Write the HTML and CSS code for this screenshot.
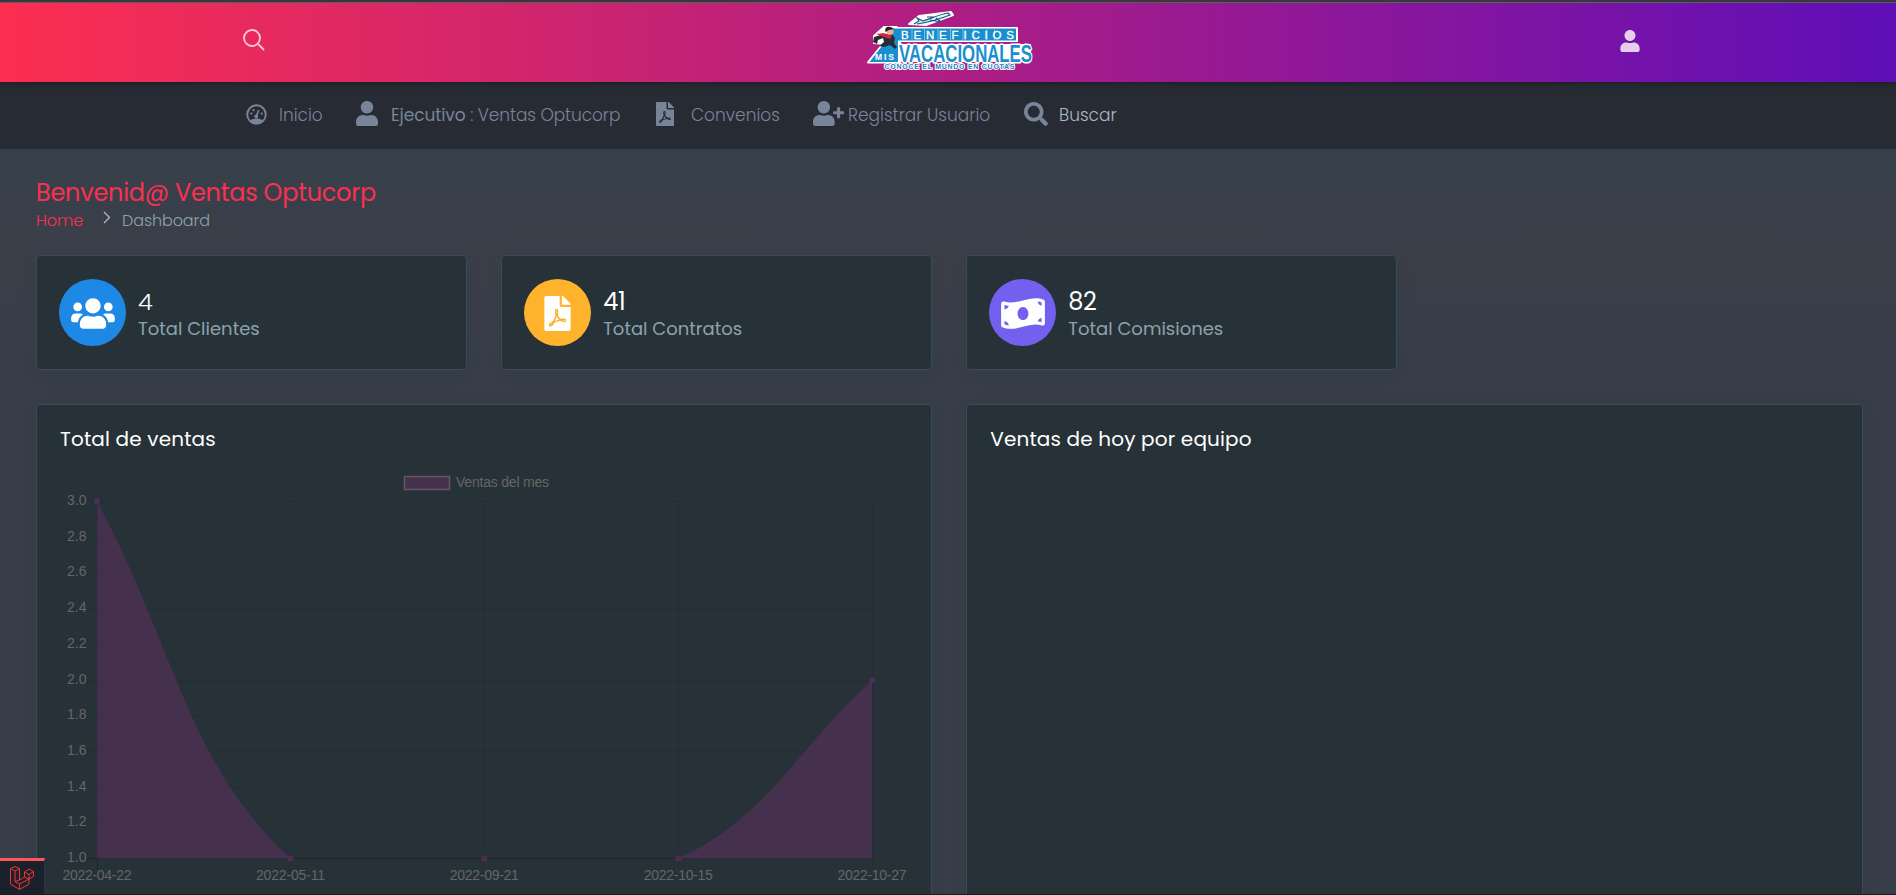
FILE: index.html
```html
<!DOCTYPE html>
<html lang="es">
<head>
<meta charset="utf-8">
<title>Beneficios Vacacionales</title>
<link rel="stylesheet" href="styles.css">
</head>
<body>
<svg class="symbols" aria-hidden="true">
  <symbol id="user" viewBox="0 0 448 512"><path d="M224 256c70.7 0 128-57.3 128-128S294.7 0 224 0 96 57.3 96 128s57.3 128 128 128zm89.6 32h-16.7c-22.2 10.2-46.9 16-72.9 16s-50.6-5.8-72.9-16h-16.7C60.2 288 0 348.2 0 422.4V464c0 26.5 21.5 48 48 48h352c26.5 0 48-21.5 48-48v-41.6c0-74.2-60.2-134.4-134.4-134.4z"/></symbol>
  <symbol id="user-plus" viewBox="0 0 640 512"><path d="M624 208h-64v-64c0-8.800-7.200-16-16-16h-32c-8.800 0-16 7.200-16 16v64h-64c-8.800 0-16 7.200-16 16v32c0 8.800 7.200 16 16 16h64v64c0 8.800 7.200 16 16 16h32c8.800 0 16-7.200 16-16v-64h64c8.800 0 16-7.200 16-16v-32c0-8.800-7.200-16-16-16zm-400 48c70.700 0 128-57.300 128-128S294.700 0 224 0 96 57.300 96 128s57.300 128 128 128zm89.600 32h-16.700c-22.200 10.200-46.900 16-72.900 16s-50.600-5.800-72.900-16h-16.700C60.200 288 0 348.200 0 422.400V464c0 26.500 21.500 48 48 48h352c26.500 0 48-21.500 48-48v-41.600c0-74.200-60.200-134.400-134.400-134.400z"/></symbol>
  <symbol id="users" viewBox="0 0 640 512"><path d="M96 224c35.300 0 64-28.700 64-64s-28.700-64-64-64-64 28.700-64 64 28.700 64 64 64zm448 0c35.300 0 64-28.700 64-64s-28.700-64-64-64-64 28.700-64 64 28.700 64 64 64zm32 32h-64c-17.600 0-33.500 7.100-45.100 18.600 40.300 22.100 68.900 62 75.100 109.400h66c17.700 0 32-14.300 32-32v-32c0-35.300-28.700-64-64-64zm-256 0c61.900 0 112-50.100 112-112S381.900 32 320 32 208 82.100 208 144s50.100 112 112 112zm76.800 32h-8.300c-20.800 10-43.900 16-68.500 16s-47.600-6-68.500-16h-8.300C179.600 288 128 339.600 128 403.200V432c0 26.500 21.500 48 48 48h288c26.500 0 48-21.500 48-48v-28.800c0-63.600-51.600-115.200-115.200-115.200zm-223.700-13.400C161.500 263.100 145.600 256 128 256H64c-35.300 0-64 28.700-64 64v32c0 17.700 14.300 32 32 32h65.900c6.300-47.400 34.900-87.300 75.200-109.400z"/></symbol>
  <symbol id="pdf" viewBox="0 0 384 512"><path d="M181.900 256.100c-5-16-4.900-46.900-2-46.900 8.400 0 7.600 36.900 2 46.900zm-1.700 47.200c-7.700 20.200-17.300 43.300-28.400 62.700 18.300-7 39-17.200 62.900-21.900-12.700-9.600-24.900-23.400-34.500-40.800zM86.100 428.100c0 .8 13.200-5.400 34.900-40.200-6.700 6.300-29.100 24.500-34.900 40.200zM248 160h136v328c0 13.300-10.700 24-24 24H24c-13.300 0-24-10.700-24-24V24C0 10.700 10.700 0 24 0h200v136c0 13.200 10.800 24 24 24zm-8 171.800c-20-12.200-33.300-29-42.700-53.800 4.500-18.500 11.600-46.600 6.200-64.200-4.700-29.400-42.400-26.500-47.800-6.800-5 18.300-.4 44.100 8.100 77-11.600 27.600-28.700 64.600-40.800 85.800-.1 0-.1.1-.2.1-27.100 13.900-73.600 44.500-54.500 68 5.600 6.900 16 10 21.500 10 17.900 0 35.700-18 61.100-61.800 25.800-8.500 54.100-19.100 79-23.200 21.700 11.800 47.100 19.500 64 19.500 29.200 0 31.200-32 19.700-43.400-13.900-13.600-54.300-9.700-73.600-7.200zM377 105L279 7c-4.500-4.500-10.600-7-17-7h-6v128h128v-6.100c0-6.300-2.500-12.400-7-16.900zm-74.100 255.300c4.100-2.700-2.500-11.900-42.800-9 37.100 15.800 42.800 9 42.800 9z"/></symbol>
  <symbol id="money" viewBox="0 0 640 512"><path d="M621.160 54.460C582.370 38.190 543.550 32 504.750 32c-123.170-.01-246.330 62.340-369.500 62.340-30.890 0-61.760-3.920-92.650-13.720-3.470-1.100-6.950-1.620-10.350-1.620C15.040 79 0 92.320 0 110.810v317.260c0 12.630 7.230 24.600 18.840 29.460C57.630 473.810 96.450 480 135.250 480c123.170 0 246.340-62.350 369.510-62.350 30.890 0 61.760 3.920 92.650 13.720 3.470 1.100 6.950 1.620 10.350 1.620 17.210 0 32.250-13.320 32.250-31.810V83.930c-.01-12.640-7.240-24.600-18.850-29.470zM48 132.220c20.120 5.040 41.120 7.570 62.720 8.930C104.840 170.540 79 192.690 48 192.690v-60.470zm0 285v-47.780c34.370 0 62.180 27.270 63.710 61.400-22.530-1.810-43.590-6.310-63.710-13.620zM320 352c-44.190 0-80-42.990-80-96 0-53.020 35.820-96 80-96s80 42.980 80 96c0 53.030-35.830 96-80 96zm272 27.780c-17.520-4.390-35.710-6.850-54.320-8.440 5.870-26.080 27.500-45.880 54.320-49.280v57.720zm0-236.110c-30.890-3.910-54.860-29.700-55.810-61.550 19.540 2.170 38.090 6.230 55.810 12.660v48.890z"/></symbol>
  <symbol id="search" viewBox="0 0 512 512"><path d="M505 442.700L405.300 343c-4.500-4.500-10.600-7-17-7H372c27.600-35.300 44-79.700 44-128C416 93.100 322.900 0 208 0S0 93.100 0 208s93.100 208 208 208c48.300 0 92.700-16.400 128-44v16.300c0 6.400 2.500 12.500 7 17l99.700 99.700c9.400 9.400 24.600 9.400 33.900 0l28.300-28.300c9.400-9.400 9.400-24.600.1-34zM208 336c-70.700 0-128-57.200-128-128 0-70.700 57.200-128 128-128 70.700 0 128 57.200 128 128 0 70.700-57.200 128-128 128z"/></symbol>
</svg>

<div class="page">
  <header class="topbar">
    <svg class="top-search" viewBox="0 0 22 22"><circle cx="9" cy="9" r="8"/><path d="M14.700 14.700 21 21"/></svg>
    <svg class="logo" viewBox="0 0 170 62">
      <g class="logo-halo">
        <path d="M2 52.500 17 34 8 33 8 26 18 17 30 17 32 18H151V31H34V52.500Z"/>
        <path d="M43 14 53 6 85 2 87 5 60 15Z"/>
        <path d="M36 35H164V51H36Z"/>
      </g>
      <path class="logo-blue" d="M3.500 52 20 31 27 18.500H32V52Z"/>
      <path class="logo-blue" d="M32 18.500H150V30.500H32Z"/>
      <path class="logo-seams" d="M46 18.500v12M58.500 18.500v12M72 18.500v12M84.500 18.500v12M97 18.500v12M108 18.500v12M121 18.500v12M128.500 18.500v12"/>
      <text class="l-top" x="35" y="28.700" textLength="113">BENEFICIOS</text>
      <text class="l-mis" x="9" y="50" textLength="19">MIS</text>
      <text class="l-main" x="33" y="51.500" textLength="133" lengthAdjust="spacingAndGlyphs">VACACIONALES</text>
      <text class="l-sub" x="18.500" y="59.200" textLength="130">CONOCE EL MUNDO EN CUOTAS</text>
      <path class="plane" d="M47 14C58 10 70 5 82 3L84 5C77 9 65 13 54 15Z"/>
      <path class="plane-wing" d="M48 14 53 11 51 8 57 11C66 8 75 4 82 3L84 5C74 9 64 12 51 14M64 10 75 12 70 8M61 7 69 7"/>
      <path class="runner" d="M18 24 26 24 29 28 28 33 31 37 29 39 24 35 18 37 13 36 18 32 17 28 12 30 11 34 7 32 8 27Z"/>
      <path class="cape" d="m10 24 8-1 8 3-2 3-6-2Z"/>
      <circle class="face" cx="24" cy="21.500" r="3.500"/>
      <path class="hair" d="M19.500 22C18 17 23 15 28 19L23 20Z"/>
    </svg>
    <svg class="top-user"><use href="#user"/></svg>
  </header>

  <nav class="menu">
    <a class="item inicio">
      <svg class="gauge" viewBox="0 0 22 22"><circle class="dial" cx="11" cy="11" r="9.700"/><path d="M4.500 18C6 15 9 16 11 15 14 16 16 15 17.500 18 14 22 8 22 4.500 18Z"/><circle cx="10.700" cy="13" r="2"/><path d="m10 12 2.700-6 1.300.6-2 6.400Z"/><circle cx="5.500" cy="10" r="1.200"/><circle cx="8" cy="6.500" r="1.200"/><circle cx="16.500" cy="10" r="1.200"/></svg>
      <span>Inicio</span>
    </a>
    <a class="item ejecutivo"><svg class="i-user"><use href="#user"/></svg><span><b>Ejecutivo</b> : Ventas Optucorp</span></a>
    <a class="item convenios"><svg class="i-pdf"><use href="#pdf"/></svg><span>Convenios</span></a>
    <a class="item registrar"><svg class="i-plus"><use href="#user-plus"/></svg><span>Registrar Usuario</span></a>
    <a class="item buscar"><svg class="i-search"><use href="#search"/></svg><span>Buscar</span></a>
  </nav>

  <main class="content">
    <h1 class="title">Benvenid@ Ventas Optucorp</h1>
    <div class="crumbs"><a>Home</a><svg viewBox="0 0 8 13"><path d="m1 1 5.500 5.500L1 12"/></svg><span>Dashboard</span></div>
    <div class="grid">
      <section class="card stat"><div class="disc blue"><svg class="d-wide"><use href="#users"/></svg></div><div><strong class="light">4</strong><p>Total Clientes</p></div></section>
      <section class="card stat"><div class="disc orange"><svg class="d-pdf"><use href="#pdf"/></svg></div><div><strong>41</strong><p>Total Contratos</p></div></section>
      <section class="card stat"><div class="disc purple"><svg class="d-wide"><use href="#money"/></svg></div><div><strong>82</strong><p>Total Comisiones</p></div></section>
      <section class="card panel">
        <h2>Total de ventas</h2>
        <svg class="chart" viewBox="60 465 850 425">
          <path class="gridline" d="M87 501.500H872M87 537.500H872M87 572.500H872M87 608.500H872M87 644.500H872M87 680.500H872M87 715.500H872M87 751.500H872M87 787.500H872M87 822.500H872M290.500 501V869M484.500 501V869M678.500 501V869M872.500 501V869"/>
          <path class="axis" d="M87 858.500H872M97.500 501V869"/>
          <path class="area" d="M97 501.500C174.400 644 185.700 762 290.500 858.500H97ZM678 858.500C767.400 817.400 794.400 751.400 872 680V858.500Z"/>
          <g class="dots"><circle cx="97" cy="501.300" r="3"/><circle cx="290.500" cy="858.500" r="3"/><circle cx="484.300" cy="858.500" r="3"/><circle cx="678.300" cy="858.500" r="3"/><circle cx="872" cy="680.300" r="3"/></g>
          <rect class="key" x="404.500" y="476.500" width="45" height="13"/>
          <text x="456" y="487" textLength="93">Ventas del mes</text>
          <g class="ylab"><text x="86.500" y="505">3.0</text><text x="86.500" y="541">2.8</text><text x="86.500" y="576">2.6</text><text x="86.500" y="612">2.4</text><text x="86.500" y="648">2.2</text><text x="86.500" y="684">2.0</text><text x="86.500" y="719">1.8</text><text x="86.500" y="755">1.6</text><text x="86.500" y="791">1.4</text><text x="86.500" y="826">1.2</text><text x="86.500" y="862">1.0</text></g>
          <g class="xlab"><text x="97" y="880" textLength="69">2022-04-22</text><text x="290.500" y="880" textLength="69">2022-05-11</text><text x="484.300" y="880" textLength="69">2022-09-21</text><text x="678.300" y="880" textLength="69">2022-10-15</text><text x="872" y="880" textLength="69">2022-10-27</text></g>
        </svg>
      </section>
      <section class="card panel"><h2>Ventas de hoy por equipo</h2></section>
    </div>
  </main>
  <div class="debugbar"><svg viewBox="0 0 24 24"><path d="M.5 2.500 5 .5l4.500 2V14l5-3V6L19 3l4.500 2.500V10.500L19 13v5L9.500 23.500.5 18ZM.5 2.500 5 5l4.500-2.500M5 5v10.500l4.500 2.500V23.500M5 15.500 9.500 14M9.500 18 19 13 14.500 11M14.500 6 19 8.500l4.500-3M19 8.500V13"/></svg></div>
  <div class="edge"></div>
</div>
</body>
</html>
```
FILE: styles.css
```css
* { box-sizing: border-box; }
body { margin: 0; overflow: hidden; background: #383e49; font-family: Poppins, Inter, "Open Sans", sans-serif; font-weight: 300; }
.symbols { position: absolute; width: 0; height: 0; }
svg { display: block; flex: none; }
.page { position: relative; height: 895px; overflow: hidden; display: flex; flex-direction: column; background: linear-gradient(#37404a 149px, #3a3f4a 240px, #383e49 400px); }

.topbar { position: relative; z-index: 1; flex: none; height: 82px; border-top: 2px solid #38373c; padding: 0 256px 0 243px; display: flex; justify-content: space-between; align-items: flex-start; background: linear-gradient(#5f5c63, #5f5c63) 0 0 / 100% 1px no-repeat, linear-gradient(90deg, #fc2e50, #5f0eb8); box-shadow: 0 1px 7px rgba(0, 0, 0, .4); }
.top-search { width: 22px; height: 22px; margin-top: 27px; fill: none; stroke: #fbc9d8; stroke-width: 1.8; }
.top-user { width: 20px; height: 22px; margin-top: 28px; fill: #e5cdec; }
.logo { width: 170px; height: 62px; margin: 8px 0 0 16px; overflow: visible; }
.logo-halo { fill: #fff; stroke: #fff; stroke-width: 2; stroke-linejoin: round; }
.logo-blue { fill: #1b8fcd; }
.logo-seams { stroke: #71bde3; stroke-width: 1; }
.logo text { font-family: "Liberation Sans", Arial, sans-serif; font-weight: 700; }
.logo .l-top { fill: #fff; font-size: 11.5px; font-weight: 400; stroke: #fff; stroke-width: .3px; }
.logo .l-mis { fill: #fff; font-size: 8.5px; }
.logo .l-main { fill: #1b8fcd; stroke: #fff; stroke-width: 3px; stroke-linejoin: round; paint-order: stroke; font-size: 23px; }
.logo .l-sub { fill: #1b7fbf; stroke: #fff; stroke-width: 2px; stroke-linejoin: round; paint-order: stroke; font-size: 7px; }
.plane { fill: #e9f2f8; }
.plane-wing { fill: none; stroke: #1b5887; stroke-width: 1.2; }
.runner { fill: #262b38; }
.cape { fill: #d5233b; }
.face { fill: #e9b18e; }
.hair { fill: #241f26; }

.menu { flex: none; height: 67px; padding: 0 0 2px 246px; display: flex; align-items: center; background: #272b34; color: #788598; fill: #788598; font-size: 17px; }
.item { display: flex; align-items: center; white-space: nowrap; }
.item svg { position: relative; top: -1px; }
.item b { font-weight: 400; }
.gauge { width: 21px; height: 21px; margin: 2px 12px 0 0; }
.dial { fill: none; stroke: #788598; stroke-width: 2; }
.i-user { width: 22px; height: 25px; margin-right: 13px; }
.i-pdf { width: 18px; height: 24px; margin-right: 17px; }
.i-plus { width: 31px; height: 25px; margin-right: 4px; }
.i-search { width: 24px; height: 24px; margin-right: 11px; }
.inicio { width: 110px; }
.ejecutivo { width: 300px; letter-spacing: -.1px; }
.convenios { width: 157px; }
.registrar { width: 211px; }
.buscar { color: #aab9c8; }

.content { padding: 28px 33.500px 0 36px; }
.title { margin: 0; font-size: 24px; line-height: 31px; font-weight: 400; color: #fb3050; letter-spacing: -.25px; white-space: nowrap; }
.crumbs { display: flex; align-items: center; height: 24px; font-size: 16px; letter-spacing: -.1px; color: #8fa2ab; }
.crumbs a { width: 67px; color: #fb3050; }
.crumbs svg { width: 8px; height: 13px; margin: -5px 11px 0 0; fill: none; stroke: #aeb9c2; stroke-width: 1.3; }
.grid { display: grid; grid-template-columns: repeat(4, 1fr); gap: 34px; margin-top: 23px; }
.card { background: #273238; border: 1px solid #394b56; border-radius: 4px; box-shadow: 0 5px 20px rgba(0, 0, 0, .05); }
.stat { height: 115px; padding: 0 22px 1px; display: flex; align-items: center; gap: 12px; }
.disc { width: 67px; height: 67px; border-radius: 50%; display: grid; place-items: center; fill: #fff; }
.blue { background: #1e88e5; }
.orange { background: #ffb22b; }
.purple { background: #7460ee; }
.d-wide { width: 44px; height: 35px; margin: 3px 0 0 1px; }
.d-pdf { width: 27px; height: 35px; margin: 3px 0 0 0; }
.stat strong { display: block; margin-top: 7px; color: #fff; font-size: 24px; line-height: 26px; font-weight: 400; letter-spacing: -.3px; }
.stat .light { font-weight: 300; }
.stat p { margin: 0; color: #8da2ad; font-size: 18px; line-height: 28px; font-weight: 400; white-space: nowrap; }
.panel { grid-column: span 2; grid-row: 2; height: 530px; padding: 22px; }
.panel h2 { margin: 0 0 0 1px; color: #fff; font-size: 20px; line-height: 24px; font-weight: 400; letter-spacing: .15px; white-space: nowrap; }
.chart { width: 850px; height: 425px; margin: 14px 0 0 1px; }
.gridline { fill: none; stroke: rgba(0, 0, 0, .09); }
.axis { fill: none; stroke: rgba(0, 0, 0, .23); }
.area { fill: rgba(99, 46, 98, .5); }
.dots { fill: rgba(99, 46, 98, .65); }
.key { fill: #45304d; stroke: #665563; stroke-width: 1.5; }
.chart text { fill: #666; font: 14px "Liberation Sans", Arial, sans-serif; }
.ylab { text-anchor: end; }
.xlab { text-anchor: middle; }

.debugbar { position: absolute; left: 0; top: 858px; width: 45px; height: 37px; border-top: 3px solid #ff5659; border-right: 1px solid #2b3445; background: #1b202d; padding: 5px 10px; }
.debugbar svg { width: 24px; height: 24px; fill: none; stroke: #f0362c; stroke-width: 1; }
.edge { position: absolute; left: 0; right: 0; bottom: 0; height: 1px; background: #1b1c20; }
```
